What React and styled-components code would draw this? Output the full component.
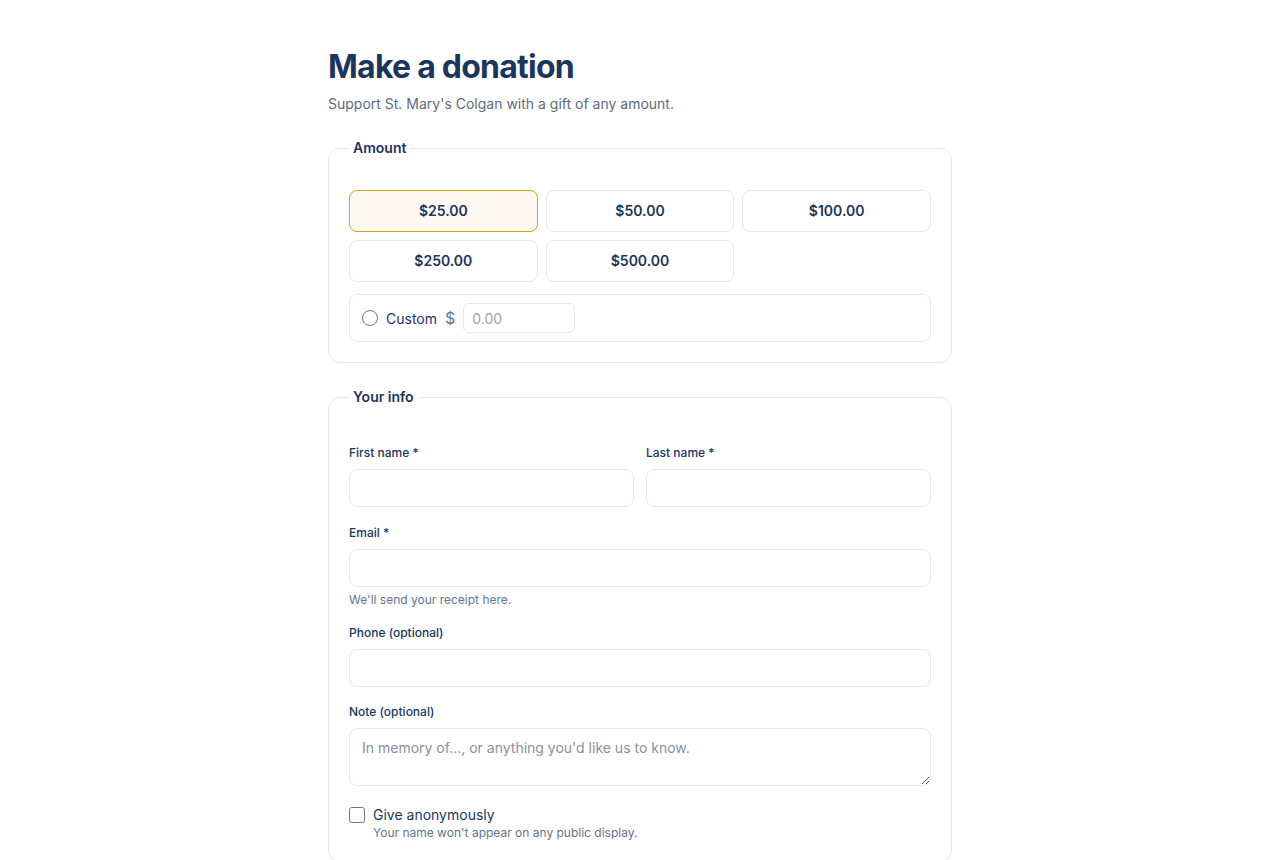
import React, { useState } from 'react';
import styled, { createGlobalStyle, css } from 'styled-components';

const GlobalStyle = createGlobalStyle`
  * { box-sizing: border-box; }
  body {
    margin: 0;
    background: #ffffff;
    font-family: Inter, "Noto Sans", "Liberation Sans", sans-serif;
    color: #1e3a5f;
  }
`;

const Page = styled.main`
  width: 624px;
  margin: 0 auto;
  padding-top: 47px;
`;

const Title = styled.h1`
  margin: 0;
  font-size: 32px;
  line-height: 40px;
  font-weight: 700;
  letter-spacing: -0.75px;
  color: #1b365d;
`;

const Lead = styled.p`
  margin: 6px 0 23px;
  font-size: 14px;
  line-height: 22px;
  color: #5f6b7a;
`;

const Section = styled.fieldset`
  margin: 0 0 24px;
  padding: ${(p) => p.$top}px 20px 20px;
  border: 1px solid #e5e7eb;
  border-radius: 12px;
  min-width: 0;
`;

const Legend = styled.legend`
  padding: 0 4px;
  font-size: 14px;
  line-height: 20px;
  font-weight: 600;
  color: #1b365d;
`;

const AmountGrid = styled.div`
  display: grid;
  grid-template-columns: repeat(3, 1fr);
  gap: 8px;
`;

const AmountButton = styled.button`
  height: 42px;
  padding: 0 0 1px;
  border-radius: 8px;
  font-family: inherit;
  font-size: 14px;
  font-weight: 600;
  color: #1b365d;
  cursor: pointer;
  border: 1px solid #e5e7eb;
  background: #ffffff;
  ${(p) =>
    p.$active &&
    css`
      border-color: #d9a21b;
      background: #fff9f1;
    `}
`;

const CustomRow = styled.label`
  margin-top: 12px;
  height: 48px;
  display: flex;
  align-items: center;
  gap: 8px;
  padding: 0 12px;
  border: 1px solid #e5e7eb;
  border-radius: 8px;
  font-size: 14px;
  color: #1b365d;
`;

const Radio = styled.input.attrs({ type: 'radio' })`
  margin: 0;
  width: 16px;
  height: 16px;
`;

const Currency = styled.span`
  font-size: 16px;
  color: #64748b;
`;

const CustomInput = styled.input`
  width: 112px;
  height: 30px;
  padding: 0 8px;
  border: 1px solid #e5e7eb;
  border-radius: 6px;
  font-family: inherit;
  font-size: 14px;
  color: #1b365d;
  &::placeholder { color: #9ca3af; }
`;

const Row = styled.div`
  display: grid;
  grid-template-columns: 1fr 1fr;
  gap: 12px;
`;

const Field = styled.div`
  display: flex;
  flex-direction: column;
  margin-bottom: ${(p) => p.$gap ?? 17}px;
`;

const Label = styled.label`
  font-size: 12px;
  line-height: 16px;
  font-weight: 500;
  color: #1b365d;
  margin-bottom: 8px;
`;

const TextInput = styled.input`
  height: 38px;
  padding: 0 12px;
  border: 1px solid #e5e7eb;
  border-radius: 8px;
  font-family: inherit;
  font-size: 14px;
  color: #1b365d;
`;

const TextArea = styled.textarea`
  height: 58px;
  padding: 9px 12px;
  border: 1px solid #e5e7eb;
  border-radius: 8px;
  font-family: inherit;
  font-size: 14px;
  line-height: 20px;
  color: #1b365d;
  resize: vertical;
  &::placeholder { color: #8a9099; }
`;

const Hint = styled.span`
  margin-top: 5px;
  font-size: 12px;
  line-height: 16px;
  color: #64748b;
`;

const CheckRow = styled.div`
  margin-top: 20px;
  display: grid;
  grid-template-columns: 16px 1fr;
  column-gap: 8px;
  align-items: center;
`;

const Check = styled.input.attrs({ type: 'checkbox' })`
  margin: 0;
  width: 16px;
  height: 16px;
`;

const CheckLabel = styled.label`
  font-size: 14px;
  line-height: 18px;
  color: #1b365d;
`;

const CheckHint = styled(Hint)`
  grid-column: 2;
  margin-top: 1px;
`;

const amounts = ['$25.00', '$50.00', '$100.00', '$250.00', '$500.00'];

export default function App() {
  const [amount, setAmount] = useState('$25.00');

  return (
    <>
      <GlobalStyle />
      <Page>
        <Title>Make a donation</Title>
        <Lead>Support St. Mary's Colgan with a gift of any amount.</Lead>

        <Section $top={32}>
          <Legend>Amount</Legend>
          <AmountGrid>
            {amounts.map((a) => (
              <AmountButton
                key={a}
                type="button"
                $active={amount === a}
                onClick={() => setAmount(a)}
              >
                {a}
              </AmountButton>
            ))}
          </AmountGrid>
          <CustomRow>
            <Radio name="amount" checked={amount === 'custom'} onChange={() => setAmount('custom')} />
            <span>Custom</span>
            <Currency>$</Currency>
            <CustomInput placeholder="0.00" inputMode="decimal" />
          </CustomRow>
        </Section>

        <Section $top={38}>
          <Legend>Your info</Legend>
          <Row>
            <Field $gap={18}>
              <Label htmlFor="first">First name *</Label>
              <TextInput id="first" />
            </Field>
            <Field $gap={18}>
              <Label htmlFor="last">Last name *</Label>
              <TextInput id="last" />
            </Field>
          </Row>
          <Field>
            <Label htmlFor="email">Email *</Label>
            <TextInput id="email" type="email" />
            <Hint>We'll send your receipt here.</Hint>
          </Field>
          <Field>
            <Label htmlFor="phone">Phone (optional)</Label>
            <TextInput id="phone" type="tel" />
          </Field>
          <Field $gap={0}>
            <Label htmlFor="note">Note (optional)</Label>
            <TextArea id="note" placeholder="In memory of..., or anything you'd like us to know." />
          </Field>
          <CheckRow>
            <Check id="anon" />
            <CheckLabel htmlFor="anon">Give anonymously</CheckLabel>
            <CheckHint>Your name won't appear on any public display.</CheckHint>
          </CheckRow>
        </Section>
      </Page>
    </>
  );
}
